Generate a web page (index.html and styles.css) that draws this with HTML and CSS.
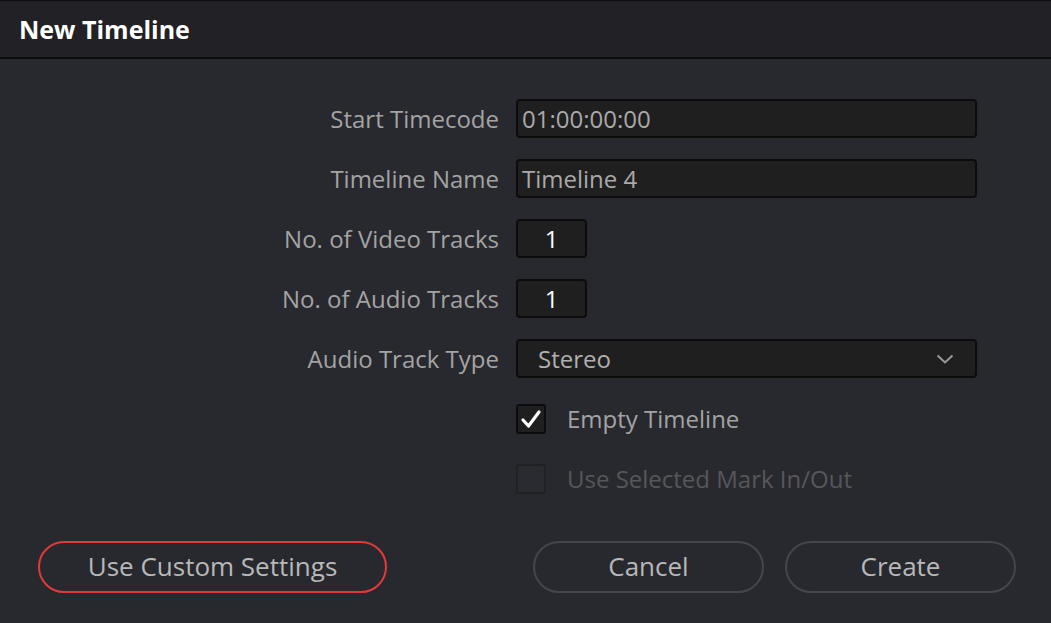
FILE: index.html
```html
<!DOCTYPE html>
<html>
<head>
<meta charset="utf-8">
<link rel="stylesheet" href="styles.css">
</head>
<body>
<div class="dialog">
  <div class="header"><h1 class="title">New Timeline</h1></div>
  <div class="body">
    <div class="form">
      <div class="row">
        <div class="label">Start Timecode</div>
        <div class="field wide">01:00:00:00</div>
      </div>
      <div class="row">
        <div class="label">Timeline Name</div>
        <div class="field wide">Timeline 4</div>
      </div>
      <div class="row">
        <div class="label">No. of Video Tracks</div>
        <div class="field num">1</div>
      </div>
      <div class="row">
        <div class="label">No. of Audio Tracks</div>
        <div class="field num">1</div>
      </div>
      <div class="row">
        <div class="label">Audio Track Type</div>
        <div class="field wide select">
          <span class="select-text">Stereo</span>
          <svg class="chevron" width="18" height="10" viewBox="0 0 18 10"><path d="M1.5 1.5 L9 8.5 L16.5 1.5" fill="none" stroke="#9a9a9a" stroke-width="2"/></svg>
        </div>
      </div>
      <div class="row check-row">
        <div class="label"></div>
        <div class="checkbox checked">
          <svg width="22" height="20" viewBox="0 0 22 20"><path d="M3 11 L8.5 17 L19 3" fill="none" stroke="#ffffff" stroke-width="3.2" stroke-linecap="round" stroke-linejoin="round"/></svg>
        </div>
        <div class="check-label">Empty Timeline</div>
      </div>
      <div class="row check-row">
        <div class="label"></div>
        <div class="checkbox disabled"></div>
        <div class="check-label dim">Use Selected Mark In/Out</div>
      </div>
    </div>
    <div class="footer">
      <button class="btn custom">Use Custom Settings</button>
      <div class="right-btns">
        <button class="btn">Cancel</button>
        <button class="btn">Create</button>
      </div>
    </div>
  </div>
</div>
</body>
</html>
```
FILE: styles.css
```css
html, body {
  margin: 0;
  padding: 0;
  width: 1051px;
  height: 623px;
  overflow: hidden;
  background: #28292e;
  font-family: "Open Sans", "DejaVu Sans", sans-serif;
}
.dialog {
  width: 1051px;
  height: 623px;
  display: flex;
  flex-direction: column;
  border-top: 1px solid #0e0e10;
  box-sizing: border-box;
}
.header {
  height: 56px;
  background: #212126;
  border-bottom: 2px solid #0c0c0e;
  display: flex;
  align-items: center;
  padding-left: 19px;
}
.title {
  margin: 0;
  font-size: 25px;
  font-weight: 700;
  color: #ffffff;
}
.body {
  flex: 1;
  display: flex;
  flex-direction: column;
  padding-top: 40px;
}
.form {
  display: flex;
  flex-direction: column;
  gap: 21px;
}
.row {
  display: flex;
  align-items: center;
  height: 39px;
}
.label {
  width: 516px;
  flex: none;
  text-align: right;
  padding-right: 17px;
  box-sizing: border-box;
  font-size: 24px;
  color: #a3a3a3;
}
.field {
  box-sizing: border-box;
  height: 39px;
  background: #1f1f1f;
  border: 2px solid #0c0c0c;
  border-radius: 4px;
  font-size: 24px;
  color: #a9a9a9;
  display: flex;
  align-items: center;
  padding-left: 4px;
}
.wide { width: 461px; }
.num {
  width: 71px;
  justify-content: center;
  padding-left: 0;
  color: #ffffff;
}
.select {
  justify-content: space-between;
  padding-left: 20px;
  padding-right: 21px;
  color: #b0b0b0;
}
.chevron { display: block; }
.checkbox {
  box-sizing: border-box;
  width: 30px;
  height: 30px;
  border-radius: 3px;
  border: 2px solid #0c0c0c;
  background: #1f1f1f;
  display: flex;
  align-items: center;
  justify-content: center;
  flex: none;
}
.checkbox.disabled {
  background: #2a2b30;
  border-color: #202125;
}
.check-label {
  margin-left: 21px;
  font-size: 24px;
  color: #a3a3a3;
}
.check-label.dim { color: #56575b; }
.footer {
  margin-top: 43px;
  display: flex;
  justify-content: space-between;
  padding: 0 35px 0 38px;
}
.right-btns {
  display: flex;
  gap: 21px;
}
.btn {
  box-sizing: border-box;
  height: 52px;
  width: 231px;
  border-radius: 26px;
  background: transparent;
  border: 2px solid #45464b;
  color: #b8b8b8;
  font-family: "Open Sans", "DejaVu Sans", sans-serif;
  font-size: 26px;
  padding: 0 0 2px 0;
}
.btn.custom {
  width: 349px;
  border-color: #e23a3a;
}
```
